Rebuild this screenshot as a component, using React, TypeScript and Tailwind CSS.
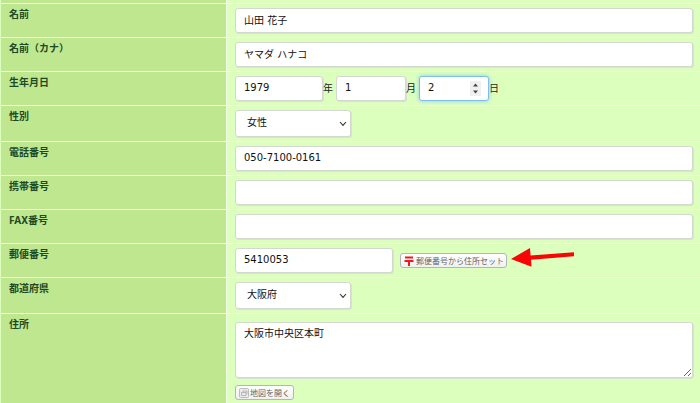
import React from 'react';

const fieldClass =
  'block rounded-[3px] border bg-white text-[10px] leading-[15px] text-[#111] focus:outline-none';

const plainBorder = 'border-[#d3d8d0] shadow-[1px_1px_0_#d8e2d0]';

const Row: React.FC<{ label: string; htmlFor: string; tall?: boolean; children: React.ReactNode }> = ({ label, htmlFor, tall, children }) => (
  <div className="flex border-t border-[#f3ffe9]">
    <div className="w-[226px] shrink-0 border-r border-[#f3ffe9] bg-[#bfe790] px-2 pt-[3px]">
      <label htmlFor={htmlFor} className="block font-['Noto_Sans','Noto_Sans_CJK_JP',sans-serif] text-[10px] leading-[15px] font-bold text-[#1d4a26]">
        {label}
      </label>
    </div>
    <div className={`min-w-0 flex-grow bg-[#dcffbd] pr-[7px] pl-2 ${tall ? 'pt-2 pb-1' : 'py-1'}`}>{children}</div>
  </div>
);

const TextField: React.FC<{ id: string; value?: string }> = ({ id, value = '' }) => (
  <input id={id} type="text" defaultValue={value} className={`${fieldClass} ${plainBorder} h-[25px] w-full px-2 pb-[2px]`} />
);

const SelectField: React.FC<{ id: string; value: string; options: string[] }> = ({ id, value, options }) => (
  <div className="relative w-[116px]">
    <select id={id} defaultValue={value} className={`${fieldClass} ${plainBorder} h-[27px] w-full appearance-none pr-6 pb-[2px] pl-[11px]`}>
      {options.map(o => (
        <option key={o} value={o}>{o}</option>
      ))}
    </select>
    <svg viewBox="0 0 8 6" className="pointer-events-none absolute top-[11px] right-1 h-[6px] w-2" fill="none" stroke="#333" strokeWidth="1.1">
      <path d="M1 1l3 3.4L7 1" />
    </svg>
  </div>
);

const NumberField: React.FC<{ id: string; label: string; value: number; className: string }> = ({ id, label, value, className }) => (
  <input
    id={id}
    type="number"
    aria-label={label}
    defaultValue={value}
    className={`${fieldClass} h-[25px] px-2 pb-[2px] [appearance:textfield] ${className}`}
  />
);

const smallButton =
  "flex h-[15px] items-center rounded-[3px] border border-[#b5b5b5] bg-linear-to-b from-white to-[#f0f0f0] px-[3px] font-['Noto_Sans_CJK_JP',sans-serif] text-[8px] leading-[13px] whitespace-nowrap text-[#666]";

export default function App() {
  return (
    <div className="min-h-screen overflow-hidden bg-[#dcffbd] pl-px font-['DejaVu_Sans','Noto_Sans_CJK_JP',sans-serif] text-[10px] leading-[15px] text-[#222]">
      <form onSubmit={e => e.preventDefault()}>
        {/* bottom edge of the previous row */}
        <div className="flex h-[3px]">
          <div className="w-[226px] shrink-0 border-r border-[#f3ffe9] bg-[#bfe790]" />
        </div>

        <Row label="名前" htmlFor="name">
          <TextField id="name" value="山田 花子" />
        </Row>
        <Row label="名前（カナ）" htmlFor="kana">
          <TextField id="kana" value="ヤマダ ハナコ" />
        </Row>
        <Row label="生年月日" htmlFor="birth-year">
          <div className="flex items-center">
            <NumberField id="birth-year" label="年" value={1979} className={`w-[88px] ${plainBorder}`} />
            <span className="w-[13px]">年</span>
            <NumberField id="birth-month" label="月" value={1} className={`w-[70px] ${plainBorder}`} />
            <span className="w-[13px]">月</span>
            <div className="relative">
              <NumberField id="birth-day" label="日" value={2} className="w-[70px] border-[#7dbdf0] shadow-[0_0_4px_#8cc8f0]" />
              <svg viewBox="0 0 11 15" className="pointer-events-none absolute top-[5px] right-2 h-[15px] w-[11px]">
                <rect width="11" height="15" fill="#f0f0f0" />
                <path d="M3 5.5L5.5 2.5 8 5.5zM3 9.5L5.5 12.5 8 9.5z" fill="#444" />
              </svg>
            </div>
            <span>日</span>
          </div>
        </Row>
        <Row label="性別" htmlFor="gender">
          <SelectField id="gender" value="女性" options={['男性', '女性']} />
        </Row>
        <Row label="電話番号" htmlFor="tel">
          <TextField id="tel" value="050-7100-0161" />
        </Row>
        <Row label="携帯番号" htmlFor="mobile">
          <TextField id="mobile" />
        </Row>
        <Row label="FAX番号" htmlFor="fax">
          <TextField id="fax" />
        </Row>
        <Row label="郵便番号" htmlFor="zip">
          <div className="flex items-center gap-[7px]">
            <div className="w-[158px]">
              <TextField id="zip" value="5410053" />
            </div>
            <div className="relative">
              <button type="button" className={`${smallButton} w-[107px] gap-[2px]`}>
                <svg viewBox="0 0 10 10" className="h-[10px] w-[10px] shrink-0" fill="none" stroke="#f01818" strokeWidth="2">
                  <path d="M1 1.5h8M0.5 5h9M5 5v5" />
                </svg>
                郵便番号から住所セット
              </button>
              {/* callout arrow pointing at the button */}
              <svg viewBox="0 0 64 22" className="pointer-events-none absolute -top-[7px] left-[111px] h-[22px] w-16" fill="#fa0505">
                <path d="M0 13L19 2l0.6 7.4L63 6.2v4L20 13.8l0.5 7z" />
              </svg>
            </div>
          </div>
        </Row>
        <Row label="都道府県" htmlFor="prefecture">
          <SelectField id="prefecture" value="大阪府" options={['東京都', '京都府', '大阪府']} />
        </Row>
        <Row label="住所" htmlFor="address" tall>
          <textarea id="address" defaultValue="大阪市中央区本町" className={`${fieldClass} ${plainBorder} h-[56px] w-full resize px-2 py-[3px]`} />
          <button type="button" className={`${smallButton} mt-[7px] w-[59px] gap-px`}>
            <svg viewBox="0 0 10 10" className="h-[10px] w-[10px] shrink-0" fill="none" stroke="#bbb">
              <rect x="0.5" y="0.5" width="9" height="9" rx="1" fill="#ececec" />
              <path d="M2.5 7.5v-3h4.5v3zM4 4.5v-1.5h4v3" stroke="#aaa" strokeWidth="0.8" />
            </svg>
            地図を開く
          </button>
        </Row>
      </form>
    </div>
  );
}
